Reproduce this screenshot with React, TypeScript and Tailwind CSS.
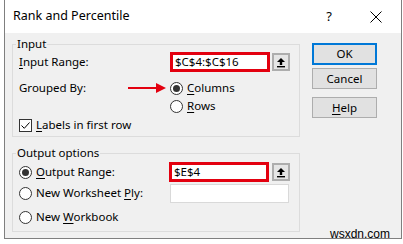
import React from "react";

const U = ({ children }: { children: React.ReactNode }) => (
  <span className="underline underline-offset-[2px] decoration-[1px]">{children}</span>
);

const Radio = ({ checked }: { checked?: boolean }) => (
  <span className="w-[13px] h-[13px] rounded-full border border-[#333] bg-white flex items-center justify-center shrink-0">
    {checked && <span className="w-[7px] h-[7px] rounded-full bg-[#333]" />}
  </span>
);

const UpBtn = () => (
  <span className="w-[18px] h-[18px] border-2 border-[#adadad] bg-[#e5e5e5] flex items-center justify-center shrink-0">
    <svg width="10" height="11" viewBox="0 0 10 11">
      <path d="M5 1 L9 5 L6.2 5 L6.2 8 L3.8 8 L3.8 5 L1 5 Z" fill="#000" />
      <rect x="1" y="9" width="8" height="1.4" fill="#000" />
    </svg>
  </span>
);

const RedBox = ({ text }: { text: string }) => (
  <span className="w-[100px] h-[20px] border-[3px] border-[#e3000f] bg-white flex items-center pl-[2px] shrink-0 leading-none">
    {text}
  </span>
);

export default function App() {
  return (
    <div className="w-[403px] h-[244px] bg-white relative overflow-hidden font-['Noto_Sans',sans-serif] text-[11.5px] text-black">
      <div className="ml-[4px] w-[398px] h-[239px] border-x border-b border-[#7f7f7f] flex flex-col">
        {/* Title bar */}
        <div className="h-[33px] bg-white flex items-center pl-[8px] pr-[19px] shrink-0">
          <span className="text-[12.5px]">Rank and Percentile</span>
          <span className="ml-auto w-[16px] text-center text-[13px]">?</span>
          <span className="ml-[33px] w-[12px] h-[12px] flex items-center justify-center">
            <svg width="12" height="12" viewBox="0 0 12 12">
              <path d="M0.5 0.5 L11.5 11.5 M11.5 0.5 L0.5 11.5" stroke="#000" strokeWidth="1" />
            </svg>
          </span>
        </div>
        {/* Body */}
        <div className="flex-1 bg-[#f0f0f0] flex pl-[7px]">
          <div className="w-[288px] flex flex-col">
            {/* Input group */}
            <div className="mt-[11px] h-[93px] border border-[#dcdcdc] relative pt-[7px] pl-[6px]">
              <span className="absolute left-[3px] top-[-9px] px-[1px] bg-[#f0f0f0] leading-[16px]">Input</span>
              <div className="h-[20px] flex items-center">
                <span className="w-[151px]">
                  <U>I</U>nput Range:
                </span>
                <RedBox text="$C$4:$C$16" />
                <span className="ml-[2px]">
                  <UpBtn />
                </span>
              </div>
              <div className="mt-[8px] h-[16px] flex items-center">
                <span className="w-[151px] flex items-center">
                  <span>Grouped By:</span>
                  <svg className="ml-auto mr-[4px]" width="38" height="10" viewBox="0 0 38 10">
                    <rect x="0" y="4" width="30" height="2" fill="#e3000f" />
                    <path d="M28 0 L38 5 L28 10 Z" fill="#e3000f" />
                  </svg>
                </span>
                <Radio checked />
                <span className="ml-[4px]">
                  <U>C</U>olumns
                </span>
              </div>
              <div className="mt-[2px] h-[16px] flex items-center">
                <span className="w-[151px]" />
                <Radio />
                <span className="ml-[4px]">
                  <U>R</U>ows
                </span>
              </div>
              <div className="mt-[3px] h-[16px] flex items-center">
                <span className="w-[13px] h-[13px] border border-[#333] bg-white flex items-center justify-center shrink-0">
                  <svg width="11" height="11" viewBox="0 0 11 11">
                    <path d="M1.5 5.5 L4.3 8.3 L9.5 2.5" stroke="#000" strokeWidth="1" fill="none" />
                  </svg>
                </span>
                <span className="ml-[4px]">
                  <U>L</U>abels in first row
                </span>
              </div>
            </div>
            {/* Output group */}
            <div className="mt-[16px] h-[79px] border border-[#dcdcdc] relative pt-[8px] pl-[6px]">
              <span className="absolute left-[3px] top-[-9px] px-[1px] bg-[#f0f0f0] leading-[16px]">Output options</span>
              <div className="h-[20px] flex items-center">
                <span className="w-[150px] flex items-center">
                  <Radio checked />
                  <span className="ml-[4px]">
                    <U>O</U>utput Range:
                  </span>
                </span>
                <RedBox text="$E$4" />
                <span className="ml-[3px]">
                  <UpBtn />
                </span>
              </div>
              <div className="mt-[1px] h-[20px] flex items-center">
                <span className="w-[151px] flex items-center">
                  <Radio />
                  <span className="ml-[4px]">
                    New Worksheet <U>P</U>ly:
                  </span>
                </span>
                <span className="w-[119px] h-[19px] border border-[#d9d9d9] bg-white" />
              </div>
              <div className="mt-[6px] h-[16px] flex items-center">
                <Radio />
                <span className="ml-[4px]">
                  New <U>W</U>orkbook
                </span>
              </div>
            </div>
          </div>
          {/* Buttons */}
          <div className="ml-[12px] w-[65px] flex flex-col">
            <button className="mt-[10px] h-[22px] w-[65px] border-2 border-[#0078d7] bg-[#e1e1e1] flex items-center justify-center">
              OK
            </button>
            <button className="mt-[3px] h-[21px] w-[65px] border border-[#adadad] bg-[#e1e1e1] flex items-center justify-center">
              Cancel
            </button>
            <button className="mt-[8px] h-[21px] w-[65px] border border-[#adadad] bg-[#e1e1e1] flex items-center justify-center">
              <span>
                <U>H</U>elp
              </span>
            </button>
          </div>
        </div>
      </div>
      <span className="absolute left-[330px] top-[227px] leading-[14px] font-['Liberation_Sans',sans-serif] text-[12px] text-black">
        wsxdn.com
      </span>
    </div>
  );
}
